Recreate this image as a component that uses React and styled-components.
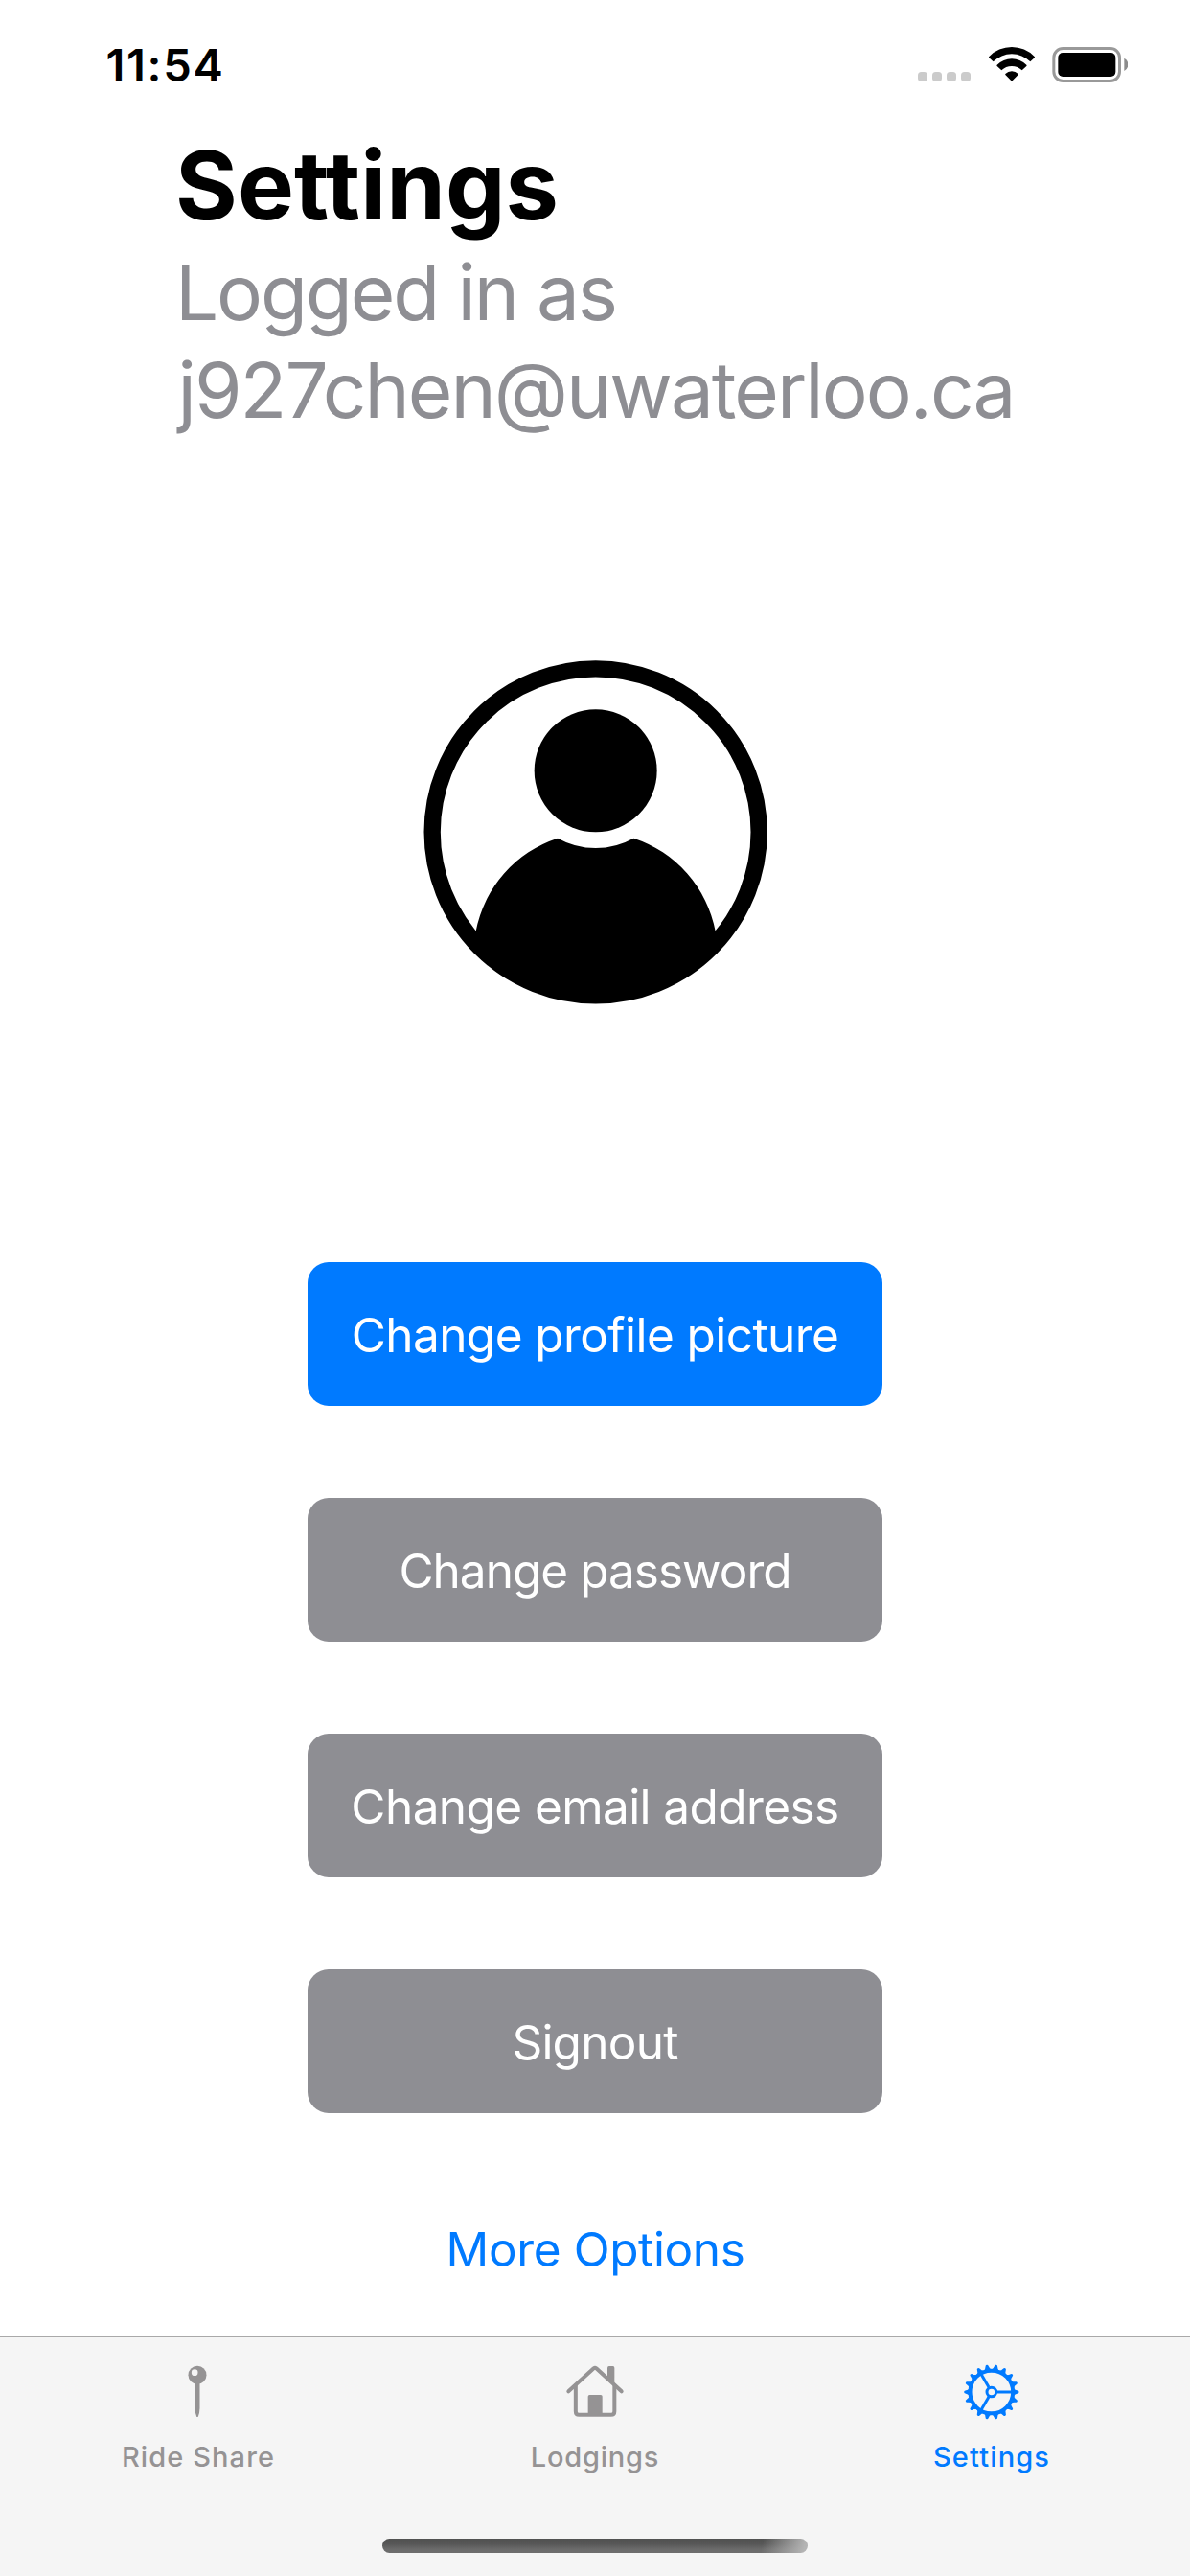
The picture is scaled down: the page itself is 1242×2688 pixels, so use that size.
import React from "react";
import styled, { createGlobalStyle } from "styled-components";

const BLUE = "#007aff";
const GRAY = "#8e8e93";
const TAB_GRAY = "#959394";

const GlobalStyle = createGlobalStyle`
  * { box-sizing: border-box; }
  body {
    margin: 0;
    background: #fff;
    font-family: Inter, "Liberation Sans", sans-serif;
  }
`;

const Screen = styled.div`
  display: flex;
  flex-direction: column;
  width: 1242px;
  height: 2688px;
  overflow: hidden;
  background: #fff;
`;

const StatusBar = styled.header`
  display: flex;
  flex: none;
  justify-content: space-between;
  height: 133px;
  padding: 0 65px 0 110.5px;
`;

const Clock = styled.time`
  padding-top: 38px;
  font-size: 47px;
  font-weight: 600;
  line-height: 60px;
  letter-spacing: 1.65px;
  color: #000;
`;

const StatusIcons = styled.div`
  display: flex;
  align-items: flex-start;
  padding-top: 48px;
`;

const SignalDots = styled.div`
  display: flex;
  gap: 5px;
  margin: 27px 18px 0 0;
`;

const Dot = styled.i`
  width: 10px;
  height: 10px;
  border-radius: 3.5px;
  background: #cbcbcb;
`;

const Wifi = styled.svg`
  width: 50px;
  height: 38px;
  margin-right: 16px;
`;

const Battery = styled.svg`
  width: 80px;
  height: 40px;
`;

const Heading = styled.section`
  flex: none;
  height: 535px;
  padding-left: 183px;
`;

const Title = styled.h1`
  margin: 0;
  font-size: 99px;
  font-weight: 700;
  line-height: 121px;
  letter-spacing: 0.1px;
  color: #000;
`;

const Subtitle = styled.div`
  padding-left: ${(p) => p.$inset || 0}px;
  font-size: 80px;
  line-height: 102px;
  letter-spacing: ${(p) => p.$tracking}px;
  white-space: nowrap;
  color: ${GRAY};
`;

const Avatar = styled.svg`
  display: block;
  flex: none;
  width: 400px;
  height: 400px;
  margin: 0 auto;
`;

const Actions = styled.main`
  display: flex;
  flex: 1;
  flex-direction: column;
  align-items: center;
  gap: 96px;
  padding-top: 249px;
`;

const Action = styled.button`
  flex: none;
  width: 600px;
  height: 150px;
  padding: 2px 0 0;
  border: 0;
  border-radius: 22px;
  background: ${(p) => (p.$primary ? BLUE : GRAY)};
  font: 400 49.5px/60px Inter, "Liberation Sans", sans-serif;
  letter-spacing: ${(p) => p.$tracking}px;
  color: #fff;
`;

const MoreLink = styled.a`
  margin-top: 16px;
  padding-left: 1px;
  font-size: 49.5px;
  line-height: 60px;
  letter-spacing: -0.38px;
  color: ${BLUE};
`;

const TabBar = styled.nav`
  display: flex;
  flex: none;
  flex-direction: column;
  align-items: center;
  justify-content: space-between;
  height: 250px;
  padding-bottom: 24px;
  border-top: 1px solid #a9a9a9;
  background: #f5f5f5;
`;

const Tabs = styled.div`
  display: grid;
  grid-template-columns: repeat(3, 414px);
`;

const Tab = styled.div`
  display: flex;
  flex-direction: column;
  align-items: center;
  padding-top: 25px;
  font-size: 29px;
  font-weight: 500;
  line-height: 36px;
  letter-spacing: ${(p) => p.$tracking}px;
  color: ${(p) => (p.$active ? BLUE : TAB_GRAY)};
`;

const TabIcon = styled.svg`
  width: 64px;
  height: 64px;
  margin-bottom: 18px;
`;

const HomeIndicator = styled.div`
  width: 444px;
  height: 15px;
  border-radius: 8px;
  background:
    linear-gradient(100deg, rgba(184, 184, 184, 0) 89%, rgba(184, 184, 184, 0.95) 99%),
    linear-gradient(#515251, #565656 35%, #6b6b6b 75%, #6e6e6e);
`;

const WifiIcon = () => (
  <Wifi viewBox="0 0 150 114">
    <path d="M4 37Q2 35 4 33A99 99 0 0 1 146 33Q148 35 146 37L133 49A82 82 0 0 0 17 49Z" />
    <path d="M29 63Q27 61 29 59A65 65 0 0 1 121 59Q123 61 121 63L107 76A46 46 0 0 0 43 76Z" />
    <path d="M55 87A29 29 0 0 1 95 87Q96 89 95 90L78 107Q75 110 72 107L55 90Q54 89 55 87Z" />
  </Wifi>
);

const BatteryIcon = () => (
  <Battery viewBox="0 0 240 120">
    <rect x="8.5" y="7.5" width="206" height="102" rx="29" fill="none" stroke="#999" strokeWidth="9" />
    <rect x="22" y="21" width="180" height="75" rx="15" />
    <path d="M229 38Q241 44 241 58T229 78Z" fill="#8c8c8c" />
  </Battery>
);

const PinIcon = () => (
  <TabIcon viewBox="0 0 192 192" fill="currentColor">
    <circle cx="93" cy="43" r="28.5" />
    <circle cx="84.5" cy="35" r="10" fill="#f5f5f5" />
    <path d="M85.5 66H100.5V146Q100 164 95 174H91Q86 164 85.5 146Z" />
  </TabIcon>
);

const HouseIcon = () => (
  <TabIcon viewBox="0 0 192 192" fill="none" stroke="currentColor" strokeLinecap="round" strokeLinejoin="round">
    <path d="M13 94L92 22Q96 19 100 22L179 94" strokeWidth="12" />
    <path d="M35.5 76V157Q35.5 167.5 46 167.5H146Q157 167.5 157 157V76" strokeWidth="12" />
    <path d="M135 51V20Q135 15 140 15H152Q157 15 157 20V71Z" fill="currentColor" stroke="none" />
    <path d="M74 168V110Q74 105 79 105H114Q119 105 119 110V168Z" fill="currentColor" stroke="none" />
  </TabIcon>
);

const TEETH = Array.from({ length: 18 }, (_, i) => i * 20);

const GearIcon = () => (
  <TabIcon viewBox="0 0 192 192" fill="none" stroke="currentColor">
    <g transform="translate(95.5 96)">
      {TEETH.map((angle) => (
        <path
          key={angle}
          transform={`rotate(${angle})`}
          d="M68 -13Q74 -6 82 -4.5Q86 -4 86 0T82 4.5Q74 6 68 13Z"
          fill="currentColor"
          stroke="none"
        />
      ))}
      <circle r="67" strokeWidth="12" />
      <circle r="14.5" strokeWidth="9" />
      {[0, 120, 240].map((angle) => (
        <path key={angle} transform={`rotate(${angle})`} d="M17 0H64" strokeWidth="9" />
      ))}
    </g>
  </TabIcon>
);

const ACTIONS = [
  { label: "Change profile picture", tracking: -0.57, primary: true },
  { label: "Change password", tracking: -0.98 },
  { label: "Change email address", tracking: -0.58 },
  { label: "Signout", tracking: -0.75 },
];

const TABS = [
  { label: "Ride Share", tracking: 1.1, Icon: PinIcon },
  { label: "Lodgings", tracking: 0.8, Icon: HouseIcon },
  { label: "Settings", tracking: 1.15, Icon: GearIcon, active: true },
];

export default function App() {
  return (
    <Screen>
      <GlobalStyle />
      <StatusBar>
        <Clock>11:54</Clock>
        <StatusIcons>
          <SignalDots>
            <Dot />
            <Dot />
            <Dot />
            <Dot />
          </SignalDots>
          <WifiIcon />
          <BatteryIcon />
        </StatusIcons>
      </StatusBar>
      <Heading>
        <Title>Settings</Title>
        <Subtitle $tracking={-2.15}>Logged in as</Subtitle>
        <Subtitle $tracking={-1.96} $inset={2.5}>
          j927chen@uwaterloo.ca
        </Subtitle>
      </Heading>
      <Avatar viewBox="0 0 1200 1200">
        <circle cx="602" cy="601" r="511.5" fill="none" stroke="#000" strokeWidth="52" />
        <circle cx="602" cy="409" r="192" />
        <path d="M227 911A382 382 0 0 1 483 620A244 244 0 0 0 721 620A382 382 0 0 1 977 911L960 960A511 511 0 0 1 245 960Z" />
      </Avatar>
      <Actions>
        {ACTIONS.map(({ label, tracking, primary }) => (
          <Action key={label} $tracking={tracking} $primary={primary}>
            {label}
          </Action>
        ))}
        <MoreLink>More Options</MoreLink>
      </Actions>
      <TabBar>
        <Tabs>
          {TABS.map(({ label, tracking, Icon, active }) => (
            <Tab key={label} $tracking={tracking} $active={active}>
              <Icon />
              {label}
            </Tab>
          ))}
        </Tabs>
        <HomeIndicator />
      </TabBar>
    </Screen>
  );
}
